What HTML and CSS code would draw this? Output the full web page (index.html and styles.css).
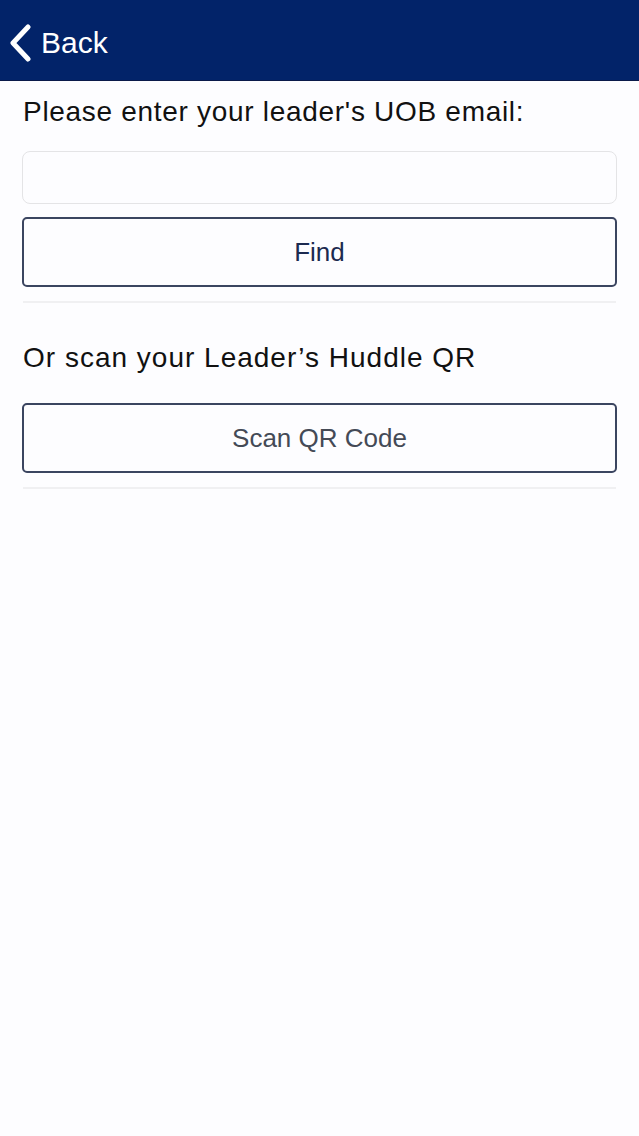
FILE: index.html
```html
<!DOCTYPE html>
<html lang="en">
<head>
    <meta charset="UTF-8">
    <meta name="viewport" content="width=device-width, initial-scale=1.0">
    <title>Find Leader</title>
    <link rel="stylesheet" href="styles.css">
</head>
<body>
    <div class="topbar">
        <a class="back" href="#">
            <svg class="chevron" width="24" height="38" viewBox="0 0 24 38">
                <path d="M20 3 L5 19 L20 35" fill="none" stroke="#ffffff" stroke-width="5" stroke-linecap="round" stroke-linejoin="round"/>
            </svg>
            <span>Back</span>
        </a>
    </div>

    <div class="content">
        <div class="section">
            <p class="label">Please enter your leader's UOB email:</p>
            <input class="field" type="email">
            <button class="btn btn-find">Find</button>
        </div>
        <hr class="sep">

        <div class="section">
            <p class="label label-scan">Or scan your Leader’s Huddle QR</p>
            <button class="btn btn-scan">Scan QR Code</button>
        </div>
        <hr class="sep">
    </div>
</body>
</html>
```

FILE: styles.css
```css
body {
    margin: 0;
    font-family: "Liberation Sans", Arial, sans-serif;
    background: #fdfdff;
    color: #111;
}
.topbar {
    height: 80px;
    background: #022369;
    border-bottom: 1px solid #0a1a4a;
    display: flex;
    align-items: center;
}
.back {
    display: flex;
    align-items: center;
    gap: 9px;
    padding-left: 8px;
    color: #ffffff;
    text-decoration: none;
    font-size: 30px;
    margin-top: 5px;
}
.chevron { display: block; }
.content { padding: 0 22px; }
.label {
    margin: 14px 1px 0;
    font-size: 28px;
    line-height: 34px;
    letter-spacing: 0.7px;
}
.label-scan {
    margin-top: 38px;
    letter-spacing: 1px;
}
.field {
    display: block;
    box-sizing: border-box;
    width: 100%;
    height: 53px;
    margin-top: 22px;
    border: 1px solid #e4e4e6;
    border-radius: 8px;
    background: #fdfdff;
    font-size: 22px;
}
.btn {
    display: block;
    box-sizing: border-box;
    width: 100%;
    height: 70px;
    border: 2px solid #3b4560;
    border-radius: 5px;
    background: #fdfdff;
    font-family: "Liberation Sans", Arial, sans-serif;
    font-size: 26px;
    cursor: pointer;
}
.btn-find {
    margin-top: 13px;
    color: #1c2a50;
}
.btn-scan {
    margin-top: 28px;
    color: #444a56;
}
.sep {
    border: none;
    border-top: 2px solid #f0f0f2;
    margin: 14px 1px 0;
}
```
